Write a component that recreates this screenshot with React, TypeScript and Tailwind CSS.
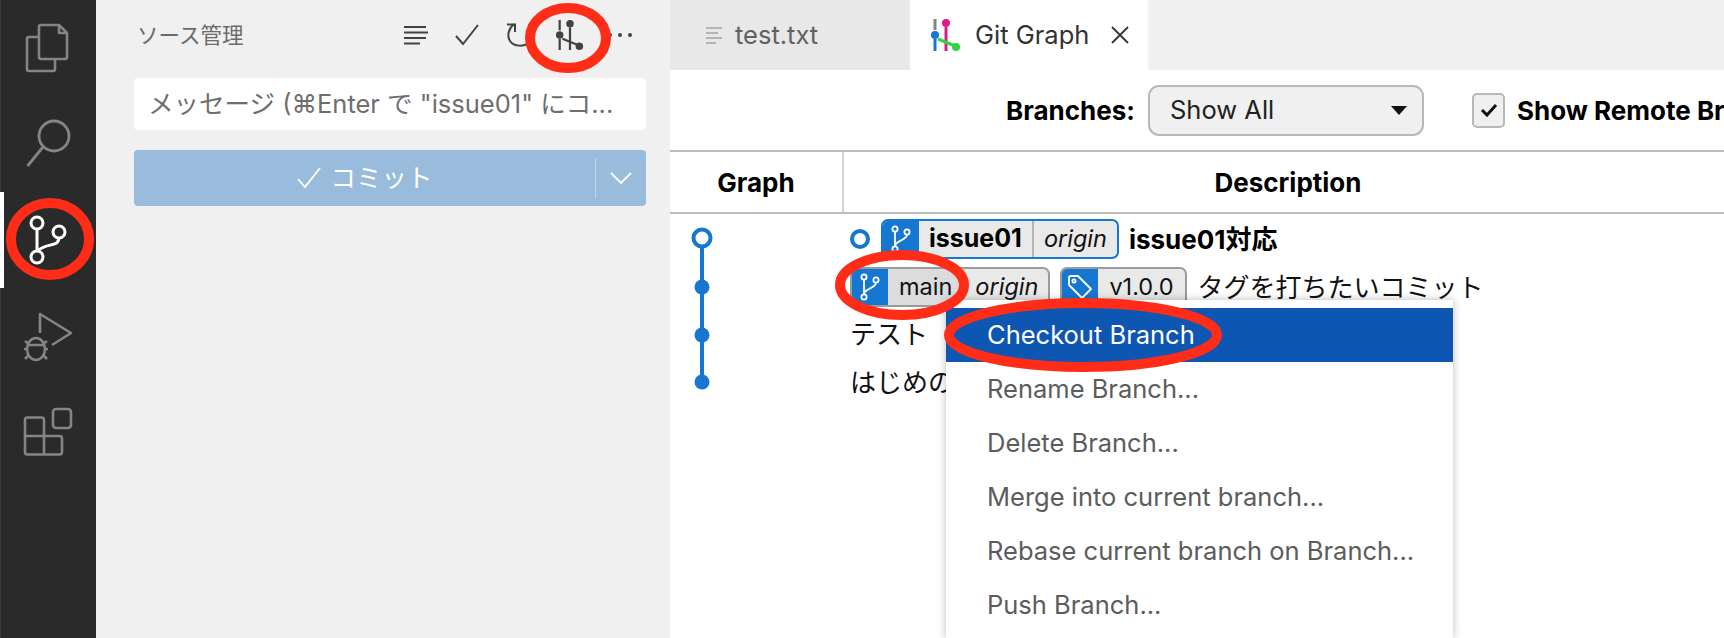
const FONT = 'font-["Inter","Noto_Sans_CJK_JP",sans-serif]'

function GitGraphIcon({ line1, dot1, line2, dot2, link, dot3, weight = 3, className }: {
  line1: string; dot1: string; line2: string; dot2: string; link: string; dot3: string; weight?: number; className?: string
}) {
  return (
    <svg viewBox="0 0 32 36" className={className} fill="none">
      <path d="M5 2V13" stroke={line1} strokeWidth={weight} />
      <path d="M5 22V34" stroke={dot1} strokeWidth={weight} />
      <circle cx="5" cy="18" r="4" fill={dot1} />
      <circle cx="16" cy="6" r="4" fill={dot2} />
      <path d="M16 10V34" stroke={line2} strokeWidth={weight} />
      <path d="M8 22L25 29" stroke={link} strokeWidth={weight} />
      <circle cx="26" cy="30" r="4" fill={dot3} />
    </svg>
  )
}

function BranchGlyph({ className }: { className?: string }) {
  return (
    <svg viewBox="0 0 24 28" className={className} fill="none" stroke="#fff" strokeWidth="1.8">
      <circle cx="6" cy="4" r="2.6" />
      <circle cx="18" cy="7" r="2.6" />
      <circle cx="6" cy="24" r="2.6" />
      <path d="M6 6.6V21.4" />
      <path d="M18 9.6C18 15 10 14 6 20" />
    </svg>
  )
}

function TagGlyph({ className }: { className?: string }) {
  return (
    <svg viewBox="0 0 26 26" className={className} fill="none" stroke="#fff" strokeWidth="1.8">
      <path d="M2 3.5C2 2.5 2.5 2 3.5 2H11L24 15L15 24L2 11Z" strokeLinejoin="round" />
      <circle cx="7" cy="7" r="1.6" />
    </svg>
  )
}

function ActivityBar() {
  return (
    <div className="w-[96px] h-full shrink-0 bg-[#2a2a2a] border-l border-[#3a3a3a] flex flex-col">
      <div className="h-[96px] -ml-px">
        <svg viewBox="0 0 96 96" className="w-[96px] h-[96px]" fill="none" stroke="#858585" strokeWidth="2.6" strokeLinejoin="round">
          <path d="M39 37H29C27.8 37 27 37.8 27 39V69C27 70.2 27.8 71 29 71H53C54.2 71 55 70.2 55 69V59" />
          <path d="M41 25H59L67 33V57C67 58.2 66.2 59 65 59H41C39.8 59 39 58.2 39 57V27C39 25.800 39.800 25 41 25Z" />
          <path d="M59 25V33H67" />
        </svg>
      </div>
      <div className="h-[96px] -ml-px">
        <svg viewBox="0 0 96 96" className="w-[96px] h-[96px]" fill="none" stroke="#858585" strokeWidth="2.8">
          <circle cx="54" cy="40" r="15" />
          <path d="M43 51L27.500 70" />
        </svg>
      </div>
      <div className="h-[96px] -ml-px relative">
        <div className="absolute left-0 top-0 w-[4px] h-full bg-white" />
        <svg viewBox="0 0 96 96" className="w-[96px] h-[96px]" fill="none" stroke="#fff" strokeWidth="3">
          <circle cx="37" cy="31" r="6" />
          <circle cx="59" cy="40" r="6" />
          <circle cx="37" cy="65" r="6" />
          <path d="M37 37V59" />
          <path d="M59 46C58 56 46 50 37 59.500" />
        </svg>
      </div>
      <div className="h-[96px] -ml-px">
        <svg viewBox="0 0 96 96" className="w-[96px] h-[96px]" fill="none" stroke="#858585" strokeWidth="2.6">
          <path d="M40 45V26L71 45L52 57" strokeLinejoin="round" />
          <ellipse cx="36" cy="61" rx="9" ry="11" />
          <path d="M27 57H45M24 61H27M45 61H48M25 53L29 56M47 53L43 56M25 71L29 67M47 71L43 67" />
        </svg>
      </div>
      <div className="h-[96px] -ml-px">
        <svg viewBox="0 0 96 96" className="w-[96px] h-[96px]" fill="none" stroke="#858585" strokeWidth="2.600" strokeLinejoin="round">
          <rect x="53" y="25" width="18" height="19" rx="3" />
          <path d="M25 52V36C25 34.500 26 33.500 27.500 33.500H41.500C43 33.500 44 34.500 44 36V70" />
          <path d="M25 52H59.500C61 52 62 53 62 54.500V68C62 69.500 61 70.500 59.500 70.500H27.500C26 70.500 25 69.500 25 68Z" />
        </svg>
      </div>
    </div>
  )
}

function SideBar() {
  return (
    <div className="w-[574px] h-full shrink-0 bg-[#f0f0f0] flex flex-col pl-[38px] pr-[24px]">
      <div className="h-[70px] flex items-center relative">
        <span className="text-[21.5px] text-[#6b6b6b] w-[243px] pl-[3px] shrink-0">ソース管理</span>
        <div className="flex items-center ml-[26px] text-[#424242]">
          <svg viewBox="0 0 26 22" className="w-[26px] h-[22px] mr-[25px]" stroke="#424242" strokeWidth="2" fill="none">
            <path d="M1 3H23M1 8.500H25M1 14H23M1 19.500H17" />
          </svg>
          <svg viewBox="0 0 26 24" className="w-[26px] h-[24px] mr-[26px]" stroke="#424242" strokeWidth="2" fill="none">
            <path d="M2 13L9 21L24 2" />
          </svg>
          <svg viewBox="0 0 26 26" className="w-[26px] h-[26px] mr-[23px]" stroke="#424242" strokeWidth="2" fill="none">
            <path d="M8 2C2 7 1 14 4 19C8 25 18 25 24 20" />
            <path d="M1 2.500H9V10" />
          </svg>
          <GitGraphIcon className="w-[30px] h-[34px] mr-[23px]" weight={2.4} line1="#424242" dot1="#424242" line2="#424242" dot2="#424242" link="#424242" dot3="#424242" />
          <div className="flex gap-[6px]">
            <span className="w-[4px] h-[4px] rounded-full bg-[#424242]" />
            <span className="w-[4px] h-[4px] rounded-full bg-[#424242]" />
            <span className="w-[4px] h-[4px] rounded-full bg-[#424242]" />
          </div>
        </div>
      </div>
      <div className="h-[52px] mt-[8px] bg-white rounded-[4px] flex items-center px-[14px] text-[25.5px] text-[#6e6e6e] whitespace-nowrap overflow-hidden">
        メッセージ (⌘Enter で "issue01" にコ...
      </div>
      <div className="h-[56px] mt-[20px] bg-[#9abcdc] rounded-[4px] flex items-center text-white">
        <div className="flex-1 flex items-center justify-center gap-[8px] text-[25.5px]">
          <svg viewBox="0 0 26 24" className="w-[26px] h-[24px]" stroke="#fff" strokeWidth="1.800" fill="none">
            <path d="M2 13L9 21L24 2" />
          </svg>
          コミット
        </div>
        <div className="w-px h-[40px] bg-[#c4d7ea]" />
        <div className="w-[50px] flex justify-center">
          <svg viewBox="0 0 22 12" className="w-[22px] h-[12px]" stroke="#fff" strokeWidth="1.800" fill="none">
            <path d="M1 1L11 11L21 1" />
          </svg>
        </div>
      </div>
    </div>
  )
}

function Tabs() {
  return (
    <div className="h-[70px] bg-[#f0f0f0] flex shrink-0">
      <div className="w-[240px] bg-[#e8e8e8] flex items-center pl-[35px] text-[25.5px] text-[#616161]">
        <svg viewBox="0 0 18 18" className="w-[18px] h-[18px] mr-[12px]" stroke="#b5b5b5" strokeWidth="2" fill="none">
          <path d="M1 2H17M1 7H13M1 12H17M1 17H11" />
        </svg>
        test.txt
      </div>
      <div className="w-[238px] bg-white flex items-center pl-[20px] text-[25.5px] text-[#333333]">
        <GitGraphIcon className="w-[32px] h-[36px] mr-[13px]" line1="#858585" dot1="#1577d2" line2="#d81b87" dot2="#d81b87" link="#2fd43f" dot3="#2fd43f" />
        Git Graph
        <svg viewBox="0 0 18 18" className="w-[18px] h-[18px] ml-[22px]" stroke="#333" strokeWidth="1.800" fill="none">
          <path d="M1 1L17 17M17 1L1 17" />
        </svg>
      </div>
    </div>
  )
}

function Controls() {
  return (
    <div className="h-[80px] shrink-0 flex items-center pl-[336px] border-b-2 border-[#bbbbbb] box-content whitespace-nowrap">
      <span className="text-[26px] font-bold text-black w-[142px] shrink-0">Branches:</span>
      <div className="w-[276px] h-[51px] shrink-0 bg-[#f0f0f0] border-2 border-[#b8b8b8] rounded-[11px] flex items-center justify-between pl-[20px] pr-[15px] text-[25.5px] text-[#222222]">
        Show All
        <svg viewBox="0 0 16 9" className="w-[16px] h-[9px]" fill="#111"><path d="M0 0H16L8 9Z" /></svg>
      </div>
      <div className="w-[33px] h-[35px] shrink-0 ml-[48px] bg-[#f0f0f0] border-2 border-[#b8b8b8] rounded-[5px] flex items-center justify-center">
        <svg viewBox="0 0 18 14" className="w-[18px] h-[14px]" stroke="#111" strokeWidth="3" fill="none"><path d="M2 7L7 12L16 2" /></svg>
      </div>
      <span className="ml-[12px] text-[26px] font-bold text-black">Show Remote Branches</span>
    </div>
  )
}

function TableHeader() {
  return (
    <div className="h-[60px] shrink-0 flex border-b-2 border-[#bbbbbb] box-content text-[26px] font-bold text-black">
      <div className="w-[174px] flex items-center justify-center border-r-2 border-[#d4d4d4]">Graph</div>
      <div className="flex-1 flex items-center justify-center pl-[8px]">Description</div>
    </div>
  )
}

function Badge({ icon, name, remote, active, shade }: {
  icon: 'branch' | 'tag'; name: string; remote?: string; active?: boolean; shade?: boolean
}) {
  return (
    <div className={`h-[40px] flex rounded-[7px] border-2 overflow-hidden shrink-0 bg-[#e9e9e9] ${active ? 'border-[#1577d2]' : 'border-[#9b9b9b]'}`}>
      <div className="w-[36px] bg-[#1577d2] flex items-center justify-center">
        {icon === 'branch' ? <BranchGlyph className="w-[24px] h-[28px]" /> : <TagGlyph className="w-[26px] h-[26px]" />}
      </div>
      <div className={`flex items-center ${active ? 'px-[10px] text-[25px] font-bold text-black' : 'px-[11px] text-[23.5px] text-[#111111]'} ${shade ? 'bg-[#dcdcdc]' : ''}`}>
        {name}
      </div>
      {remote && (
        <div className={`flex items-center px-[10px] italic text-[23.5px] text-[#111111] border-l-2 ${shade ? 'border-[#cfcfcf]' : 'border-[#b5b5b5]'}`}>
          {remote}
        </div>
      )}
    </div>
  )
}

function CommitList() {
  return (
    <div className="flex-1 flex min-h-0">
      <div className="w-[180px] shrink-0">
        <svg viewBox="0 0 180 190" className="w-[180px] h-[190px]" fill="#1577d2">
          <path d="M32 26V168" stroke="#1577d2" strokeWidth="4" />
          <circle cx="32" cy="24" r="8.500" fill="#fff" stroke="#1577d2" strokeWidth="4" />
          <circle cx="32" cy="73" r="7.500" />
          <circle cx="32" cy="121" r="7.500" />
          <circle cx="32" cy="168" r="7.500" />
        </svg>
      </div>
      <div className="flex-1 text-[26px] text-[#111111] whitespace-nowrap">
        <div className="h-[48px] flex items-center pt-[2px]">
          <span className="w-[20px] h-[20px] mr-[11px] rounded-full border-4 border-[#1577d2] shrink-0" />
          <Badge icon="branch" name="issue01" remote="origin" active />
          <span className="ml-[10px] font-bold text-black">issue01対応</span>
        </div>
        <div className="h-[48px] flex items-center pt-[2px]">
          <div className="mr-[10px]">
            <Badge icon="branch" name="main" remote="origin" shade />
          </div>
          <Badge icon="tag" name="v1.0.0" />
          <span className="ml-[11px]">タグを打ちたいコミット</span>
        </div>
        <div className="h-[48px] flex items-center">テスト</div>
        <div className="h-[48px] flex items-center">はじめのコミット</div>
      </div>
    </div>
  )
}

const MENU_ITEMS = ['Rename Branch...', 'Delete Branch...', 'Merge into current branch...', 'Rebase current branch on Branch...', 'Push Branch...']

function ContextMenu() {
  return (
    <div className="absolute left-[946px] top-[300px] w-[507px] h-[338px] bg-white pt-[8px] shadow-[0_0_8px_rgba(0,0,0,0.28)] text-[25.500px]">
      <div className="h-[54px] bg-[#0d56b2] text-white flex items-center pl-[41px]">Checkout Branch</div>
      {MENU_ITEMS.map((item) => (
        <div key={item} className="h-[54px] text-[#5c5c5c] flex items-center pl-[41px]">{item}</div>
      ))}
    </div>
  )
}

// red rings drawn over the screenshot
function Annotations() {
  return (
    <svg viewBox="0 0 1724 638" className="absolute inset-0 w-[1724px] h-[638px] pointer-events-none" fill="none" stroke="#ff2d18" strokeWidth="10">
      <ellipse cx="50" cy="239" rx="39" ry="36" />
      <ellipse cx="568" cy="38" rx="38" ry="30" />
      <ellipse cx="902" cy="285" rx="62" ry="30" />
      <ellipse cx="1083" cy="335" rx="134" ry="32" />
    </svg>
  )
}

export default function App() {
  return (
    <div className={`relative w-[1724px] h-[638px] flex overflow-hidden bg-white ${FONT}`}>
      <ActivityBar />
      <SideBar />
      <div className="flex-1 min-w-0 flex flex-col">
        <Tabs />
        <Controls />
        <TableHeader />
        <CommitList />
      </div>
      <ContextMenu />
      <Annotations />
    </div>
  )
}
